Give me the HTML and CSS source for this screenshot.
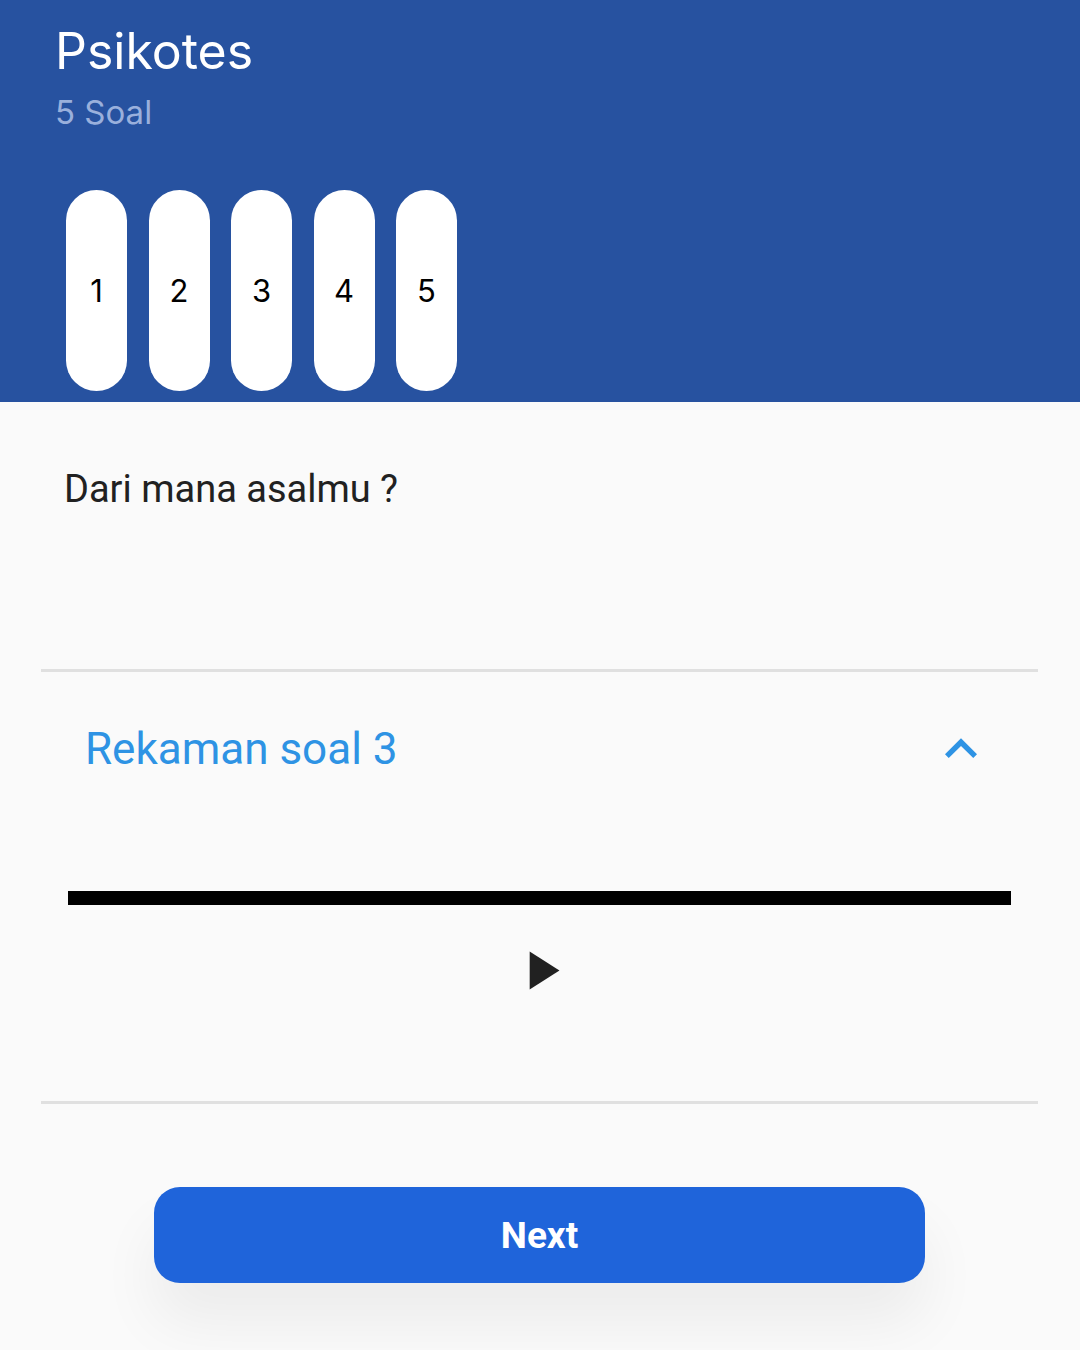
FILE: index.html
```html
<!DOCTYPE html>
<html lang="id">
<head>
<meta charset="utf-8">
<title>Psikotes</title>
<link rel="stylesheet" href="styles.css">
</head>
<body>
<div class="page">
  <header class="header">
    <div class="title">Psikotes</div>
    <div class="subtitle">5 Soal</div>
    <div class="pills">
      <div class="pill">1</div>
      <div class="pill">2</div>
      <div class="pill">3</div>
      <div class="pill">4</div>
      <div class="pill">5</div>
    </div>
  </header>
  <main class="content">
    <div class="question">Dari mana asalmu ?</div>
    <div class="divider"></div>
    <div class="rec-row">
      <div class="rec-title">Rekaman soal 3</div>
      <svg class="chevron" viewBox="0 0 24 24" width="64" height="64"><path d="M12 8l-6 6 1.41 1.41L12 10.83l4.59 4.58L18 14z" fill="#2E93E4"/></svg>
    </div>
    <div class="bar"></div>
    <div class="play-row">
      <svg class="play" viewBox="0 0 24 24" width="65" height="65"><path d="M8 5v14l11-7z" fill="#212121"/></svg>
    </div>
    <div class="divider divider-2"></div>
    <div class="btn-row">
      <button class="next">Next</button>
    </div>
  </main>
</div>
</body>
</html>
```
FILE: styles.css
```css
html, body {
  margin: 0;
  padding: 0;
  background: #FAFAFA;
}
.page {
  width: 1080px;
  height: 1350px;
  overflow: hidden;
  background: #FAFAFA;
  font-family: Roboto, "Liberation Sans", sans-serif;
}
.header {
  height: 402px;
  box-sizing: border-box;
  background: #2752A0;
  padding: 21px 0 0 55px;
  font-family: Inter, "Open Sans", sans-serif;
}
.title {
  font-size: 50px;
  line-height: 60px;
  color: #FFFFFF;
  font-weight: 400;
}
.subtitle {
  margin-top: 11px;
  font-size: 33px;
  line-height: 40px;
  color: #9AB0DC;
}
.pills {
  display: flex;
  gap: 21.5px;
  margin: 58px 0 0 11px;
}
.pill {
  width: 61px;
  height: 201px;
  border-radius: 31px;
  background: #FFFFFF;
  display: flex;
  align-items: center;
  justify-content: center;
  font-size: 31px;
  color: #000000;
}
.content {
  display: flex;
  flex-direction: column;
}
.question {
  margin: 64px 0 0 64px;
  font-size: 38px;
  line-height: 46px;
  color: #212121;
}
.divider {
  margin: 157px 0 0 41px;
  width: 997px;
  height: 3px;
  background: #E0E0E0;
}
.rec-row {
  display: flex;
  align-items: center;
  justify-content: space-between;
  margin: 45px 87px 0 85px;
  height: 64px;
}
.rec-title {
  font-size: 44px;
  line-height: 53px;
  color: #2E93E4;
}
.chevron {
  display: block;
}
.bar {
  margin: 110px 0 0 68px;
  width: 943px;
  height: 14px;
  background: #000000;
}
.play-row {
  display: flex;
  justify-content: center;
  margin-top: 33px;
}
.play {
  display: block;
}
.divider-2 {
  margin-top: 98px;
}
.btn-row {
  display: flex;
  margin: 83px 0 0 154px;
}
.next {
  width: 771px;
  height: 96px;
  border: none;
  border-radius: 26px;
  background: #1F64DA;
  color: #FFFFFF;
  font-family: Roboto, "Liberation Sans", sans-serif;
  font-weight: 700;
  font-size: 37px;
  box-shadow: 0 40px 60px rgba(0, 0, 0, 0.06);
  padding: 0;
}
```
